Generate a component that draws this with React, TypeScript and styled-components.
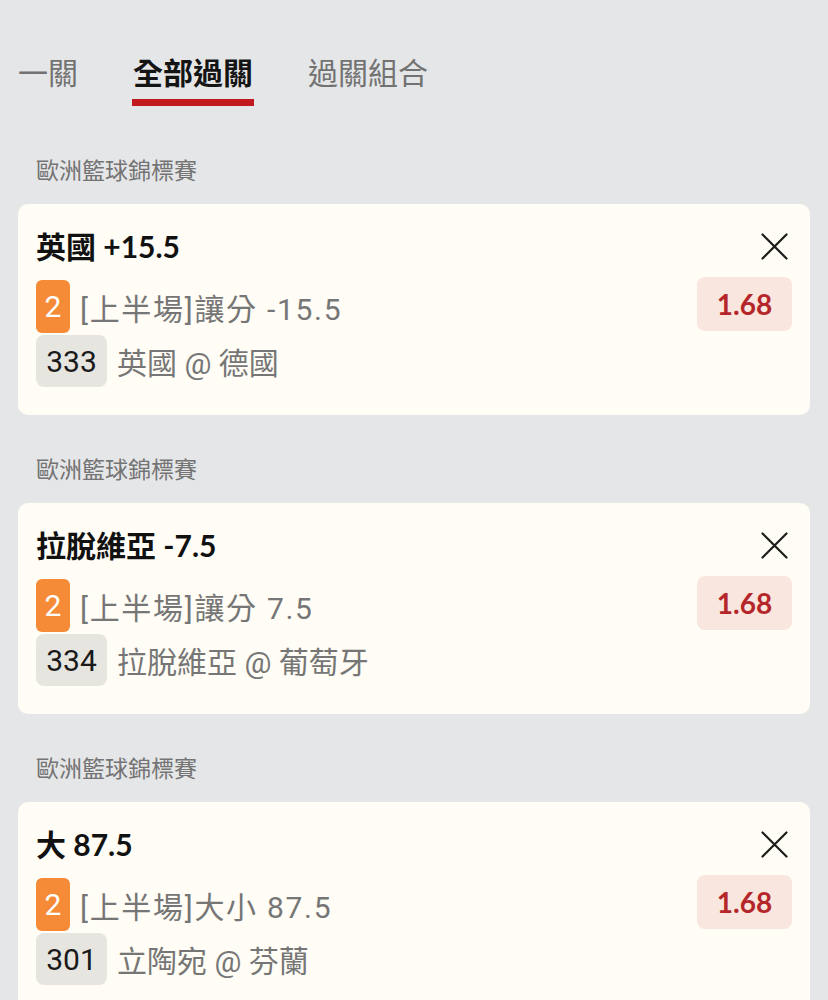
import React from 'react';
import styled, { createGlobalStyle } from 'styled-components';

const GlobalStyle = createGlobalStyle`
  html, body {
    margin: 0;
    padding: 0;
    background: #e5e6e8;
  }
  body {
    font-family: "Noto Sans CJK TC", "Noto Sans", sans-serif;
  }
`;

const Page = styled.div`
  padding: 51px 18px 0 18px;
  min-height: 1000px;
  box-sizing: border-box;
`;

const TabBar = styled.div`
  display: flex;
  gap: 55px;
`;

const Tab = styled.div<{ $active?: boolean }>`
  display: flex;
  flex-direction: column;
  align-items: stretch;
  gap: 7px;
  font-size: 30px;
  line-height: 41px;
  font-weight: ${(p) => (p.$active ? 700 : 400)};
  color: ${(p) => (p.$active ? '#141414' : '#727272')};
  font-family: "Noto Sans CJK TC", sans-serif;

  &::after {
    content: '';
    display: block;
    height: 7px;
    margin: 0 -1px;
    background: ${(p) => (p.$active ? '#c1191d' : 'transparent')};
  }
`;

const Section = styled.section<{ $first?: boolean }>`
  display: flex;
  flex-direction: column;
  gap: 18px;
  margin-top: ${(p) => (p.$first ? '46px' : '36px')};
`;

const League = styled.div`
  padding-left: 18px;
  font-size: 23px;
  line-height: 34px;
  color: #747474;
  font-family: "Noto Sans CJK TC", sans-serif;
`;

const Card = styled.div`
  background: #fffdf5;
  border-radius: 10px;
  padding: 22px 18px 28px 18px;
  display: flex;
  flex-direction: column;
`;

const CardHead = styled.div`
  display: flex;
  align-items: center;
  justify-content: space-between;
  height: 40px;
  margin-bottom: 14px;
`;

const Title = styled.div`
  font-family: "Lato", "Noto Sans CJK TC", sans-serif;
  font-weight: 700;
  font-size: 30px;
  line-height: 40px;
  color: #111;
`;

const CloseButton = styled.button`
  border: 0;
  background: none;
  padding: 0;
  margin-right: 4px;
  width: 28px;
  height: 28px;
  display: flex;
  align-items: center;
  justify-content: center;
  cursor: pointer;
`;

const Line = styled.div`
  display: flex;
  align-items: center;
  gap: 10px;
  & + & {
    margin-top: 2px;
  }
`;

const Badge = styled.span<{ $tone: 'orange' | 'grey' }>`
  display: inline-flex;
  align-items: center;
  justify-content: center;
  box-sizing: border-box;
  height: ${(p) => (p.$tone === 'orange' ? '53px' : '52px')};
  min-width: ${(p) => (p.$tone === 'orange' ? '34px' : '71px')};
  padding: 0 6px;
  border-radius: ${(p) => (p.$tone === 'orange' ? '6px' : '8px')};
  background: ${(p) => (p.$tone === 'orange' ? '#f58b36' : '#e7e5e0')};
  color: ${(p) => (p.$tone === 'orange' ? '#fff' : '#1a1a1a')};
  font-family: "Roboto", sans-serif;
  font-size: 30px;
`;

const Detail = styled.span<{ $spaced?: boolean }>`
  font-family: "Roboto", "Noto Sans CJK TC", sans-serif;
  font-size: 30px;
  letter-spacing: ${(p) => (p.$spaced ? '1.7px' : '0')};
  color: #767676;
`;

const Odds = styled.span`
  margin-left: auto;
  margin-top: -5px;
  width: 95px;
  height: 54px;
  display: inline-flex;
  align-items: center;
  justify-content: center;
  border-radius: 8px;
  background: #f9e6de;
  color: #b5262a;
  font-family: "Lato", sans-serif;
  font-weight: 700;
  font-size: 28px;
`;

const CloseIcon = () => (
  <svg width="27" height="27" viewBox="0 0 27 27" fill="none">
    <path d="M1.5 1.5 L25.5 25.5 M25.5 1.5 L1.5 25.5" stroke="#1c1c1c" strokeWidth="2.2" strokeLinecap="round" />
  </svg>
);

type Bet = {
  league: string;
  title: string;
  detail: string;
  code: string;
  match: string;
  odds: string;
};

const bets: Bet[] = [
  { league: '歐洲籃球錦標賽', title: '英國 +15.5', detail: '[上半場]讓分 -15.5', code: '333', match: '英國 @ 德國', odds: '1.68' },
  { league: '歐洲籃球錦標賽', title: '拉脫維亞 -7.5', detail: '[上半場]讓分 7.5', code: '334', match: '拉脫維亞 @ 葡萄牙', odds: '1.68' },
  { league: '歐洲籃球錦標賽', title: '大 87.5', detail: '[上半場]大小 87.5', code: '301', match: '立陶宛 @ 芬蘭', odds: '1.68' },
];

export default function App() {
  return (
    <>
      <GlobalStyle />
      <Page>
        <TabBar>
          <Tab>一關</Tab>
          <Tab $active>全部過關</Tab>
          <Tab>過關組合</Tab>
        </TabBar>
        {bets.map((b, i) => (
          <Section key={i} $first={i === 0}>
            <League>{b.league}</League>
            <Card>
              <CardHead>
                <Title>{b.title}</Title>
                <CloseButton aria-label="remove">
                  <CloseIcon />
                </CloseButton>
              </CardHead>
              <Line>
                <Badge $tone="orange">2</Badge>
                <Detail $spaced>{b.detail}</Detail>
                <Odds>{b.odds}</Odds>
              </Line>
              <Line>
                <Badge $tone="grey">{b.code}</Badge>
                <Detail>{b.match}</Detail>
              </Line>
            </Card>
          </Section>
        ))}
      </Page>
    </>
  );
}
